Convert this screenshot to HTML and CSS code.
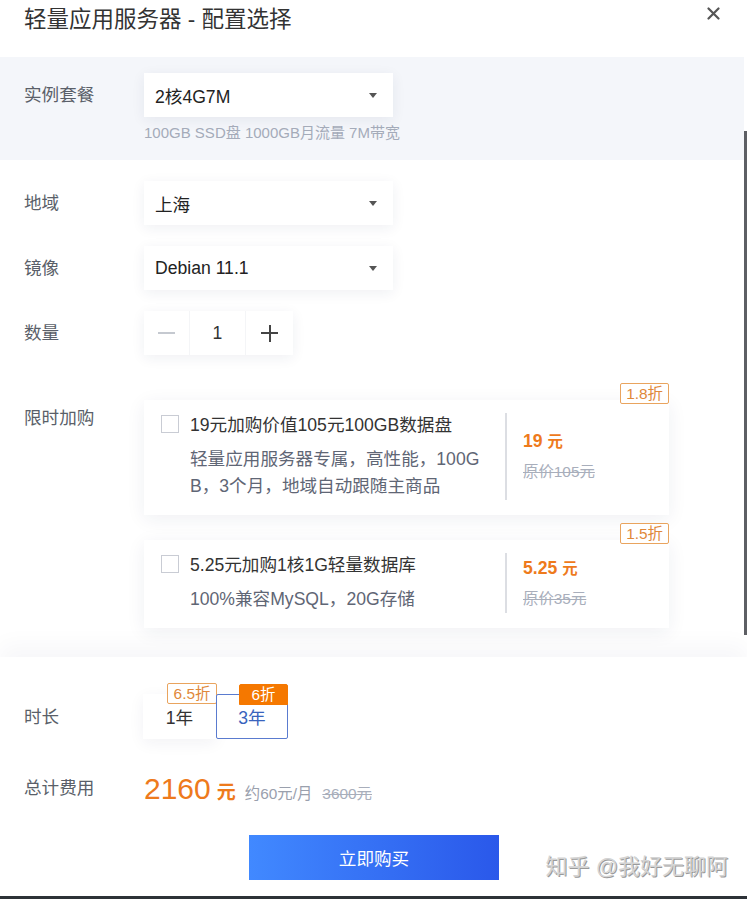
FILE: index.html
```html
<!DOCTYPE html>
<html lang="zh-CN">
<head>
  <meta charset="UTF-8">
  <meta name="viewport" content="width=device-width, initial-scale=1.0">
  <title>轻量应用服务器 - 配置选择</title>
  <link rel="stylesheet" href="styles.css">
</head>
<body>
  <div class="dialog">
    <header class="dialog-header">
      <h1>轻量应用服务器 - 配置选择</h1>
      <button class="close" aria-label="关闭">
        <svg width="13" height="13" viewBox="0 0 13 13">
          <path d="M1.5 1.5 L11.5 11.5 M11.5 1.5 L1.5 11.5" stroke="#555" stroke-width="2.2" stroke-linecap="round"/>
        </svg>
      </button>
    </header>

    <section class="plan">
      <div class="row row-top">
        <label class="label">实例套餐</label>
        <div>
          <div class="select"><span>2核4G7M</span><i class="caret"></i></div>
          <p class="hint">100GB SSD盘 1000GB月流量 7M带宽</p>
        </div>
      </div>
    </section>

    <section class="options">
      <div class="row">
        <label class="label">地域</label>
        <div class="select"><span>上海</span><i class="caret"></i></div>
      </div>
      <div class="row">
        <label class="label">镜像</label>
        <div class="select"><span>Debian 11.1</span><i class="caret"></i></div>
      </div>
      <div class="row row-count">
        <label class="label">数量</label>
        <div class="stepper">
          <span class="step minus"><i></i></span>
          <span class="step value">1</span>
          <span class="step plus"><i></i><i></i></span>
        </div>
      </div>
      <div class="row row-top">
        <label class="label label-addon">限时加购</label>
        <div class="addons">
          <div class="addon">
            <span class="tag">1.8折</span>
            <div class="addon-main">
              <span class="checkbox"></span>
              <div class="addon-text">
                <p class="addon-title">19元加购价值105元100GB数据盘</p>
                <p class="addon-desc">轻量应用服务器专属，高性能，100GB，3个月，地域自动跟随主商品</p>
              </div>
            </div>
            <div class="addon-price">
              <p class="price">19 <small>元</small></p>
              <p class="old">原价105元</p>
            </div>
          </div>
          <div class="addon">
            <span class="tag">1.5折</span>
            <div class="addon-main">
              <span class="checkbox"></span>
              <div class="addon-text">
                <p class="addon-title">5.25元加购1核1G轻量数据库</p>
                <p class="addon-desc">100%兼容MySQL，20G存储</p>
              </div>
            </div>
            <div class="addon-price">
              <p class="price">5.25 <small>元</small></p>
              <p class="old">原价35元</p>
            </div>
          </div>
        </div>
      </div>
    </section>

    <footer class="dialog-footer">
      <div class="row duration-row">
        <label class="label">时长</label>
        <div class="durations">
          <div class="duration">
            <span class="tag tag-year">6.5折</span>
            1年
          </div>
          <div class="duration active">
            <span class="tag tag-active">6折</span>
            3年
          </div>
        </div>
      </div>
      <div class="row total-row">
        <label class="label">总计费用</label>
        <div class="total">
          <span class="amount">2160</span>
          <span class="unit">元</span>
          <span class="monthly">约60元/月</span>
          <span class="old">3600元</span>
        </div>
      </div>
      <div class="actions">
        <button class="buy">立即购买</button>
      </div>
      <div class="bottom-bar"></div>
    </footer>

    <div class="scrollbar"></div>
    <div class="watermark">知乎 @我好无聊阿</div>
  </div>
</body>
</html>
```

FILE: styles.css
```css
body {
  margin: 0;
  background-color: #fff;
  font-family: "Liberation Sans", "Noto Sans CJK SC", sans-serif;
  color: #333;
  overflow: hidden;
}
p {
  margin: 0;
}
.dialog {
  position: relative;
  width: 747px;
  height: 899px;
  overflow: hidden;
  display: flex;
  flex-direction: column;
}
.dialog-header {
  height: 57px;
  display: flex;
  justify-content: space-between;
  align-items: flex-start;
  padding: 0 27px 0 24px;
}
.dialog-header h1 {
  margin: 0;
  font-size: 22.5px;
  font-weight: normal;
  line-height: 39px;
  color: #333;
}
.close {
  margin-top: 7px;
  padding: 0;
  border: none;
  background: none;
  display: flex;
}
.row {
  display: flex;
  align-items: center;
}
.row-top {
  align-items: flex-start;
}
.label {
  width: 144px;
  box-sizing: border-box;
  padding-left: 24px;
  flex-shrink: 0;
  font-size: 17.6px;
  line-height: 44px;
  color: #5a5f69;
}

/* plan band */
.plan {
  background-color: #f4f6fa;
  width: 744px;
  padding: 16px 0 18px;
}
.select {
  width: 249px;
  height: 44px;
  box-sizing: border-box;
  background-color: #fff;
  box-shadow: 0 3px 14px rgba(30, 40, 80, 0.07);
  display: flex;
  align-items: center;
  justify-content: space-between;
  padding: 0 16px 0 11px;
  font-size: 17.6px;
  color: #222;
}
.caret {
  width: 0;
  height: 0;
  border-left: 4px solid transparent;
  border-right: 4px solid transparent;
  border-top: 5px solid #555;
}
.hint {
  margin-top: 7px;
  font-size: 15px;
  line-height: 18px;
  color: #a4abb9;
}

/* options */
.options {
  padding: 21px 0 29px;
}
.options .row + .row {
  margin-top: 21px;
}
.options .row-count + .row {
  margin-top: 28px;
}
.stepper {
  display: flex;
  height: 44px;
  background-color: #fff;
  box-shadow: 0 3px 14px rgba(30, 40, 80, 0.07);
}
.step {
  position: relative;
  display: flex;
  align-items: center;
  justify-content: center;
}
.minus {
  width: 45px;
  border-right: 1px solid #f4f5f7;
}
.minus i {
  width: 17px;
  height: 2px;
  background-color: #c5c9d0;
}
.value {
  width: 55px;
  font-size: 17.6px;
  color: #333;
  border-right: 1px solid #f4f5f7;
}
.plus {
  width: 47px;
}
.plus i {
  position: absolute;
  background-color: #444;
}
.plus i:first-child {
  width: 17px;
  height: 2px;
}
.plus i:last-child {
  width: 2px;
  height: 17px;
}
.label-addon {
  line-height: 22px;
  padding-top: 24px;
}
.addons {
  width: 525px;
  padding-top: 17px;
}
.addon {
  position: relative;
  display: flex;
  background-color: #fff;
  box-shadow: 0 4px 18px rgba(30, 40, 80, 0.07);
  padding: 13px 0 15px;
}
.addon + .addon {
  margin-top: 25px;
}
.tag {
  position: absolute;
  top: -17px;
  right: 0;
  height: 21px;
  box-sizing: border-box;
  padding: 0 5px;
  border: 1px solid #e9a45e;
  border-radius: 2px;
  background-color: #fff;
  font-size: 15.4px;
  line-height: 19px;
  color: #e0883a;
}
.addon-main {
  width: 361px;
  box-sizing: border-box;
  display: flex;
  padding-left: 17px;
}
.checkbox {
  width: 18px;
  height: 18px;
  box-sizing: border-box;
  margin-top: 2px;
  border: 1px solid #c9ccd4;
  background-color: #fff;
  flex-shrink: 0;
}
.addon-text {
  width: 292px;
  margin-left: 11px;
}
.addon-title {
  font-size: 17.6px;
  line-height: 24px;
  color: #333;
}
.addon-desc {
  margin-top: 9px;
  font-size: 17.6px;
  line-height: 27px;
  color: #5f6675;
  word-break: break-all;
}
.addon-price {
  flex: 1;
  border-left: 2px solid #dcdee3;
  padding-left: 16px;
  display: flex;
  flex-direction: column;
  justify-content: center;
}
.price {
  font-size: 17.6px;
  font-weight: bold;
  line-height: 22px;
  color: #ee7a1c;
}
.price small {
  font-size: 15.4px;
}
.old {
  font-size: 15.4px;
  color: #a8aebb;
  text-decoration: line-through;
}
.addon-price .old {
  margin-top: 8px;
  line-height: 22px;
}

/* footer */
.dialog-footer {
  position: relative;
  flex: 1;
  background-color: #fff;
  box-shadow: 0 -12px 22px rgba(30, 40, 80, 0.035);
  display: flex;
  flex-direction: column;
}
.duration-row {
  padding-top: 37px;
}
.durations {
  display: flex;
  margin-left: -1px;
}
.duration {
  position: relative;
  width: 73px;
  height: 45px;
  box-sizing: border-box;
  display: flex;
  align-items: center;
  justify-content: center;
  background-color: #fff;
  box-shadow: 0 4px 16px rgba(30, 40, 80, 0.06);
  font-size: 17.6px;
  color: #333;
}
.duration.active {
  width: 72px;
  border: 1px solid #5a7bcf;
  border-radius: 2px;
  color: #3963bd;
  box-shadow: none;
}
.tag-year {
  top: -11px;
  right: -1px;
  width: 50px;
  padding: 0;
  text-align: center;
}
.tag-active {
  top: -11px;
  right: -1px;
  width: 49px;
  text-align: center;
  border-color: #f57800;
  background-color: #f57800;
  color: #fff;
  border-radius: 2px 2px 0 0;
}
.total-row {
  margin-top: 29px;
  height: 40px;
}
.total {
  display: flex;
  align-items: baseline;
  margin-top: 2px;
}
.amount {
  font-size: 30px;
  color: #ee7a1c;
}
.unit {
  margin-left: 6px;
  font-size: 19px;
  font-weight: bold;
  color: #ee7a1c;
}
.monthly {
  margin-left: 9px;
  font-size: 15.4px;
  color: #9aa0ad;
}
.total .old {
  margin-left: 10px;
}
.actions {
  margin-top: 27px;
  display: flex;
  justify-content: center;
}
.buy {
  width: 250px;
  height: 45px;
  margin-left: 1px;
  border: none;
  background: linear-gradient(90deg, #4189ff, #2a58ea);
  color: #fff;
  font-family: inherit;
  font-size: 17.6px;
}
.bottom-bar {
  margin-top: auto;
  height: 3px;
  background-color: #2d3237;
}
.scrollbar {
  position: absolute;
  left: 744px;
  top: 131px;
  width: 3px;
  height: 504px;
  background-color: #5d5f64;
}
.watermark {
  position: absolute;
  right: 19px;
  top: 852px;
  font-size: 22px;
  line-height: 30px;
  color: #d4d4d4;
  text-shadow: 1px 1px 0 #9a9a9a, -1px -1px 0 #fff;
}
```
